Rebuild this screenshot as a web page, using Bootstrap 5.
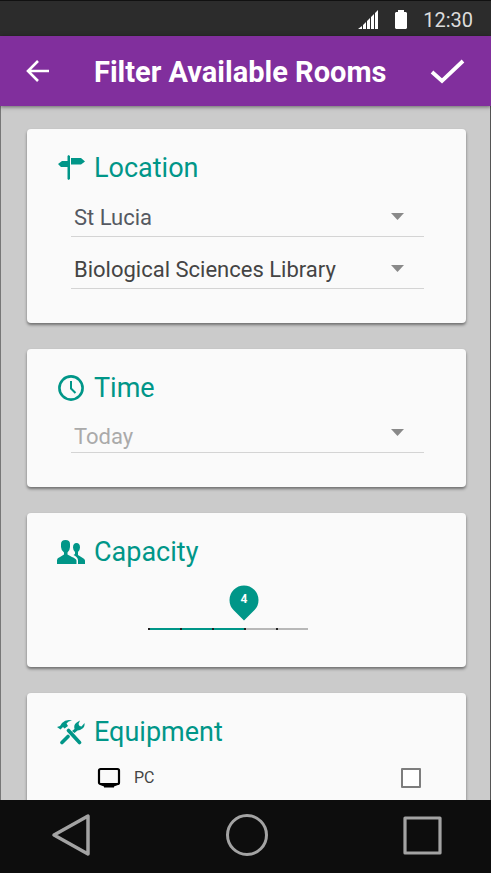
<!DOCTYPE html>
<html lang="en">
<head>
<meta charset="utf-8">
<meta name="viewport" content="width=device-width, initial-scale=1">
<title>Filter Available Rooms</title>
<link href="https://cdn.jsdelivr.net/npm/bootstrap@5.3.0/dist/css/bootstrap.min.css" rel="stylesheet">
<style>
:root { --teal: #009688; --purple: #812f9d; }
body { font-family: Roboto, "Noto Sans", sans-serif; background: #cbcbcb; color: #444; }
.status-bar { background: #2c2c2c; border-top: 1px solid #111; height: 36px; padding: 2px 18px 0; color: #dcdcdc; font-size: 20px; line-height: 34px; }
.app-bar { background: var(--purple); height: 70px; padding: 0 26px 0 24px; box-shadow: 0 1px 4px rgba(0,0,0,.5); z-index: 1; }
.app-title { font-size: 29px; line-height: 36px; font-weight: 700; margin-left: 43px; padding-top: 2px; }
.screen { min-height: 0; border-left: 1px solid #777; border-right: 1px solid #555; padding: 23px 24px 0 26px; gap: 26px; }
.panel { background: #fafafa; border: 0; border-radius: 4px; padding: 18px 42px 34px 30px; box-shadow: 0 2px 3px rgba(0,0,0,.45); }
.panel-short { padding-bottom: 28px; }
.panel-title { color: var(--teal); font-size: 27px; line-height: 42px; font-weight: 400; gap: 9px; }
.fields { padding-left: 14px; gap: 12px; }
.line-select { height: 40px; padding: 2px 48px 0 3px; border: 0; border-bottom: 1px solid #d4d4d4; border-radius: 0; background-color: transparent; background-size: 13px 7px; background-position: right 20px center; font-size: 22px; line-height: 37px; color: #444;
  background-image: url("data:image/svg+xml,%3csvg xmlns='http://www.w3.org/2000/svg' viewBox='0 0 13 7'%3e%3cpath fill='%23898989' d='M0 0h13L6.500 7z'/%3e%3c/svg%3e"); }
.campus { color: #555962; }
.unset { color: #aaa; padding-top: 8px; line-height: 31px; }
.capacity { width: 160px; padding-top: 38px; margin-left: 91px; }
.capacity-range { appearance: none; width: 100%; height: 20px; margin: 0; background:
  repeating-linear-gradient(90deg, #222 0 2px, transparent 2px 32px) 0 center / 100% 2px no-repeat,
  linear-gradient(90deg, var(--teal) 60%, #b8b8b8 60%) 0 center / 100% 2px no-repeat; }
.capacity-range::-webkit-slider-thumb { appearance: none; width: 1px; height: 20px; background: transparent; }
.pin { width: 30px; height: 36px; left: 60%; top: 4px; color: #fff; font-size: 12px; line-height: 29px; font-weight: 700; }
.equip-row { padding: 0 3px 0 40px; margin-top: 13px; gap: 13px; }
.equip-label { font-size: 16px; line-height: 24px; }
.form-check-input.equip-box { width: 20px; height: 20px; margin: 0; border: 2px solid #7d7d7d; border-radius: 1px; background-color: #fff; }
.nav-keys { background: #0d0d0d; height: 73px; padding: 0 47px 4px 49px; }
</style>
<script src="https://cdn.jsdelivr.net/npm/bootstrap@5.3.0/dist/js/bootstrap.bundle.min.js"></script>
</head>
<body class="d-flex flex-column vh-100 overflow-hidden">
<div class="status-bar d-flex align-items-center justify-content-end flex-shrink-0">
  <svg width="21" height="20" viewBox="0 0 21 20" fill="#fff" aria-hidden="true"><path d="M0 19l4-3v3zM5 15l3-3v7H5zM9 11l3-3v11H9zM13 7l3-3v15h-3zM17 3l3-3v19h-3z"/></svg>
  <svg class="ms-3" width="12" height="20" viewBox="0 0 12 20" fill="#fff" aria-hidden="true"><path d="M3 0h6v2h2l1 1v15l-1 1H1l-1-1V3l1-1h2z"/></svg>
  <time class="ms-3">12:30</time>
</div>
<header class="app-bar d-flex align-items-center text-white flex-shrink-0 position-relative">
  <button type="button" class="btn p-0 border-0 d-flex" aria-label="Back"><svg width="27" height="24" viewBox="0 0 27 24" fill="none" stroke="#fff" stroke-width="2.600"><path d="M25 12H4M14 2L4 12l10 10"/></svg></button>
  <h1 class="app-title mb-0 text-nowrap">Filter Available Rooms</h1>
  <button type="button" class="btn p-0 border-0 d-flex ms-auto" aria-label="Apply"><svg width="36" height="28" viewBox="0 0 36 28" fill="none" stroke="#fff" stroke-width="3.800"><path d="M3 15l10 9L34 4"/></svg></button>
</header>
<main class="screen d-flex flex-column flex-grow-1 overflow-hidden">
  <section class="panel card flex-shrink-0">
    <h2 class="panel-title d-flex align-items-center mb-2">
      <svg width="28" height="26" viewBox="0 0 28 26" fill="currentColor" aria-hidden="true"><path d="M10.500 1l1-1 1.500 1v23l-1.500 1-1-1V12H4L1 9l4-3h5.500zM14 3h10l4 3.500-4 3H14z"/></svg>Location</h2>
    <div class="fields d-flex flex-column">
      <select class="form-select line-select campus" aria-label="Campus"><option>St Lucia</option></select>
      <select class="form-select line-select" aria-label="Building"><option>Biological Sciences Library</option></select>
    </div>
  </section>
  <section class="panel card flex-shrink-0">
    <h2 class="panel-title d-flex align-items-center mb-1">
      <svg width="28" height="26" viewBox="0 0 28 26" fill="none" stroke="currentColor" aria-hidden="true"><circle cx="14" cy="13" r="11.600" stroke-width="2.600"/><path d="M14 6v7.500l4.500 4.500" stroke-width="2"/></svg>Time</h2>
    <div class="fields">
      <select class="form-select line-select unset" aria-label="Day"><option>Today</option></select>
    </div>
  </section>
  <section class="panel panel-short card flex-shrink-0">
    <h2 class="panel-title d-flex align-items-center mb-2">
      <svg width="28" height="26" viewBox="0 0 28 26" fill="currentColor" aria-hidden="true"><path d="M0 25v-4q0-2 3-3l4-2.500v-2Q4 11 4 8V5q0-4 4.500-4T13 5v3q0 3-2.500 5.500v2l4.500 2.500q4 1.500 4.500 3.500V25zM21 25v-4q-.5-3-4.500-5l1.500-1v-2q-2-2-2-4.500Q16 4 19.500 4T23 8.500q0 2.500-2 4.500v3l4 2.500q3 1.500 3 3V25z"/></svg>Capacity</h2>
    <div class="capacity position-relative d-flex">
      <input type="range" class="capacity-range" min="1" max="6" value="4" id="capacity" aria-label="Capacity">
      <output for="capacity" class="pin position-absolute translate-middle-x text-center"><svg class="position-absolute top-0 start-0" width="30" height="36" viewBox="0 0 30 36" fill="#009688" aria-hidden="true"><path d="M15 35.500L4.500 25Q.5 21 .5 15a14.500 14.500 0 0 1 29 0q0 6-4 10z"/></svg><span class="position-relative">4</span></output>
    </div>
  </section>
  <section class="panel card flex-shrink-0">
    <h2 class="panel-title d-flex align-items-center mb-0">
      <svg width="28" height="26" viewBox="0 0 28 26" fill="currentColor" aria-hidden="true"><path d="M0 8l3-1 2-3q4-4 10-2.500Q11 2 9.500 4.500L11 7 7.500 9.500 6 8 3.500 10.500z"/><path d="M11.500 11.500l11 12" stroke="currentColor" stroke-width="3.600" stroke-linecap="round"/><path d="M17.500 10Q16.500 6 19 4t4-2.500L21.500 5l1 2 2 .5L27.500 4q.5 3.500-2 5.500t-5 2L17.500 14 15 12z"/><path d="M11 17.500l-6 6" stroke="currentColor" stroke-width="3.600" stroke-linecap="round"/></svg>Equipment</h2>
    <div class="equip-row d-flex align-items-center">
      <svg width="24" height="22" viewBox="0 0 24 22" aria-hidden="true"><rect x="2" y="2" width="20" height="15" rx="1.500" fill="none" stroke="#000" stroke-width="2.200"/><path d="M2 16h20l-1 2-4 1.500v1H7v-1L3 18z"/></svg>
      <label for="pc" class="equip-label">PC</label>
      <input type="checkbox" id="pc" class="form-check-input equip-box ms-auto">
    </div>
  </section>
</main>
<nav class="nav-keys d-flex align-items-center justify-content-between flex-shrink-0" aria-label="System">
  <button type="button" class="btn p-0 border-0 d-flex" aria-label="Back key"><svg width="44" height="44" viewBox="0 0 44 44" fill="none" stroke="#a3a3a3" stroke-width="3.500" stroke-linejoin="round"><path d="M5 22L39 3v38z"/></svg></button>
  <button type="button" class="btn p-0 border-0 d-flex" aria-label="Home"><svg width="44" height="44" viewBox="0 0 44 44" fill="none" stroke="#a3a3a3" stroke-width="3"><circle cx="22" cy="22" r="19.500"/></svg></button>
  <button type="button" class="btn p-0 border-0 d-flex" aria-label="Recent apps"><svg width="44" height="44" viewBox="0 0 44 44" fill="none" stroke="#a3a3a3" stroke-width="3.200" stroke-linejoin="round"><path d="M5 5h35v35H5z"/></svg></button>
</nav>
</body>
</html>
